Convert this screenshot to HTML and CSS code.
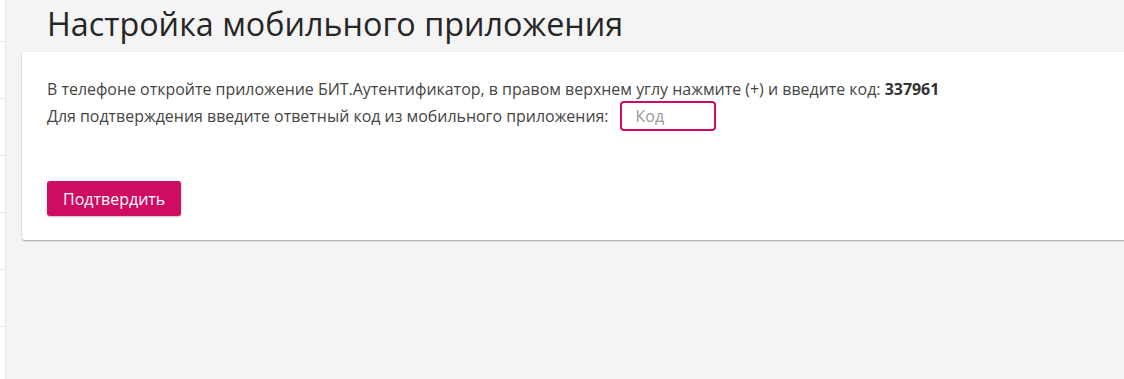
FILE: index.html
```html
<!DOCTYPE html>
<html lang="ru">
<head>
  <meta charset="UTF-8">
  <meta name="viewport" content="width=device-width, initial-scale=1.0">
  <title>Настройка мобильного приложения</title>
  <link rel="stylesheet" href="styles.css">
</head>
<body>
  <div class="sidebar">
    <div class="side-item first"></div>
    <div class="side-item"></div>
    <div class="side-item"></div>
    <div class="side-item"></div>
    <div class="side-item"></div>
    <div class="side-item"></div>
  </div>
  <div class="main">
    <h1>Настройка мобильного приложения</h1>
    <div class="card">
      <p class="line">В телефоне откройте приложение БИТ.Аутентификатор, в правом верхнем углу нажмите (+) и введите код: <b>337961</b></p>
      <div class="line confirm-row">
        <span>Для подтверждения введите ответный код из мобильного приложения:</span>
        <input type="text" class="code-input" placeholder="Код">
      </div>
      <button class="btn">Подтвердить</button>
    </div>
  </div>
</body>
</html>
```

FILE: styles.css
```css
body {
  margin: 0;
  font-family: "Open Sans", sans-serif;
  background: #f4f4f4;
  color: #333;
  display: flex;
  height: 100vh;
  overflow: hidden;
}
.sidebar {
  width: 5px;
  background: #fff;
  border-right: 1px solid #e6e6e6;
  flex-shrink: 0;
}
.side-item {
  height: 56px;
  border-bottom: 1px solid #e6e6e6;
}
.side-item.first {
  height: 41px;
}
.main {
  flex: 1;
  padding-left: 16px;
  min-width: 0;
}
h1 {
  font-weight: 400;
  font-size: 32.3px;
  line-height: 46px;
  margin: 0 0 6px 25px;
  color: #262626;
}
.card {
  background: #fff;
  border-radius: 3px;
  box-shadow: 0 1px 2px rgba(0,0,0,0.35);
  margin-right: -10px;
  padding: 26px 25px 24px;
}
.line {
  margin: 0;
  font-size: 15.95px;
  line-height: 22px;
  color: #444;
}
.line b {
  color: #333;
}
.confirm-row {
  display: flex;
  align-items: center;
  gap: 11px;
  margin-top: 1px;
}
.code-input {
  width: 96px;
  height: 30px;
  box-sizing: border-box;
  border: 2px solid #cf0c62;
  border-radius: 4px;
  padding: 0 14px;
  font-family: "Open Sans", sans-serif;
  font-size: 16px;
  outline: none;
}
.code-input::placeholder {
  color: #999;
}
.btn {
  display: block;
  margin-top: 50px;
  padding: 0 16px;
  height: 35px;
  background: #cf0c62;
  color: #fff;
  border: none;
  border-radius: 3px;
  font-family: "Open Sans", sans-serif;
  font-size: 16px;
  box-shadow: 0 1px 2px rgba(0,0,0,0.25);
  cursor: pointer;
}
```
